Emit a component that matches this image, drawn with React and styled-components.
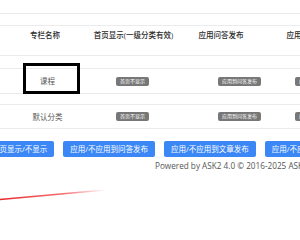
import React from 'react';
import styled, { createGlobalStyle } from 'styled-components';

const GlobalStyle = createGlobalStyle`
  * {
    margin: 0;
    padding: 0;
    box-sizing: border-box;
  }
  body {
    background: #fff;
    overflow: hidden;
    font-family: "Open Sans", "Noto Sans CJK SC", sans-serif;
    color: #333;
  }
`;

const Page = styled.div`
  position: relative;
  width: 300px;
  height: 240px;
  overflow: hidden;
`;

const Band = styled.div`
  height: ${p => p.$h}px;
  border-bottom: 1px solid #ebebeb;
`;

const HeadRow = styled.div`
  display: grid;
  grid-template-columns: 90px 87px 88px 88px;
  height: 30px;
  border-bottom: 1px solid #ebebeb;
`;

const HeadCell = styled.div`
  padding-top: 4px;
  text-align: center;
  font-size: 7.5px;
  font-weight: 500;
  line-height: 10px;
  white-space: nowrap;
  color: #2b2b2b;
`;

const BodyRow = styled.div`
  display: grid;
  grid-template-columns: 95px 75px 125px 1fr;
  align-items: center;
  height: ${p => p.$h}px;
  border-bottom: 1px solid #ebebeb;
`;

const Cell = styled.div`
  position: relative;
  display: flex;
  justify-content: ${p => (p.$start ? 'flex-start' : 'center')};
  padding-left: ${p => p.$pad || 0}px;
  font-size: 7.5px;
  line-height: 10px;
  color: #555;
  white-space: nowrap;
`;

const Highlight = styled.span`
  position: absolute;
  left: 23px;
  top: -13px;
  width: 57px;
  height: 31px;
  border: 3.5px solid #000;
`;

const Badge = styled.span`
  display: inline-block;
  height: 9px;
  padding: 0 4px;
  border-radius: 2px;
  background: #777;
  color: #fff;
  font-size: 5px;
  line-height: 9px;
  white-space: nowrap;
`;

const Actions = styled.div`
  display: flex;
  gap: 9px;
  margin: 12px 0 0 -15px;
`;

const Button = styled.button`
  flex: none;
  height: 16px;
  padding: 0 7px;
  border: 0;
  border-radius: 2px;
  background: #3b87f5;
  color: #fff;
  font-family: "Open Sans", "Noto Sans CJK SC", sans-serif;
  font-size: 7.5px;
  line-height: 16px;
  white-space: nowrap;
`;

const Footer = styled.div`
  margin-top: 3px;
  padding-left: 155px;
  font-size: 8.2px;
  line-height: 12px;
  color: #555;
  white-space: nowrap;
`;

const Arrow = styled.svg`
  position: absolute;
  left: 0;
  top: 185px;
`;

const rows = [
  { name: '课程', h: 24, marked: true },
  { name: '默认分类', h: 23 },
];

export default function App() {
  return (
    <Page>
      <GlobalStyle />
      <Band $h={14} />
      <Band $h={12} />
      <HeadRow>
        <HeadCell>专栏名称</HeadCell>
        <HeadCell>首页显示(一级分类有效)</HeadCell>
        <HeadCell>应用问答发布</HeadCell>
        <HeadCell>应用文章发布</HeadCell>
      </HeadRow>
      {rows.map((r, i) => (
        <React.Fragment key={r.name}>
          <Band $h={i === 0 ? 13 : 11} />
          <BodyRow $h={r.h + 1}>
            <Cell>
              {r.name}
              {r.marked && <Highlight />}
            </Cell>
            <Cell><Badge>首页不显示</Badge></Cell>
            <Cell $start $pad={48}><Badge>应用到问答发布</Badge></Cell>
            <Cell $start><Badge>应用到文章发布</Badge></Cell>
          </BodyRow>
        </React.Fragment>
      ))}
      <Actions>
        <Button>首页显示/不显示</Button>
        <Button>应用/不应用到问答发布</Button>
        <Button>应用/不应用到文章发布</Button>
        <Button>应用/不应用到文章发布</Button>
      </Actions>
      <Footer>Powered by ASK2 4.0 © 2016-2025 ASK2.cn</Footer>
      <Arrow width="110" height="20" viewBox="0 0 110 20">
        <defs>
          <linearGradient id="fade" x1="0" y1="0" x2="1" y2="0">
            <stop offset="0" stopColor="#e8262b" />
            <stop offset="0.6" stopColor="#f0464a" stopOpacity="0.8" />
            <stop offset="1" stopColor="#f0464a" stopOpacity="0" />
          </linearGradient>
        </defs>
        <line x1="0" y1="14.5" x2="105" y2="5" stroke="url(#fade)" strokeWidth="1.3" />
      </Arrow>
    </Page>
  );
}
